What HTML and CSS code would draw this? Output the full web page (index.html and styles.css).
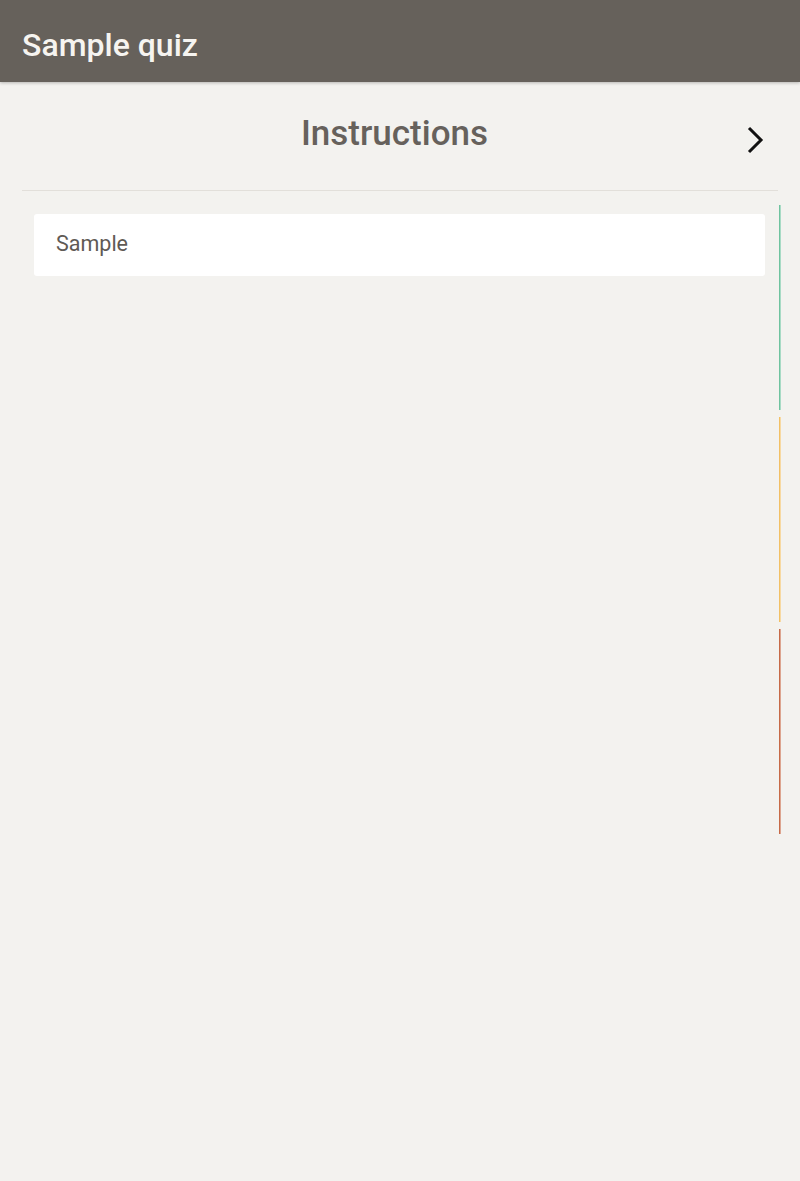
FILE: index.html
```html
<!DOCTYPE html>
<html lang="en">
<head>
<meta charset="utf-8">
<title>Sample quiz</title>
<link rel="stylesheet" href="styles.css">
</head>
<body>
<header class="app-bar">
  <h1 class="app-title">Sample quiz</h1>
</header>
<main class="page">
  <div class="section-head">
    <h2 class="section-title">Instructions</h2>
    <button class="next-btn" aria-label="Next">
      <svg width="24" height="28" viewBox="0 0 24 28"><polyline points="6,2 18,14 6,26" fill="none" stroke="#111" stroke-width="3"/></svg>
    </button>
  </div>
  <div class="content">
    <div class="cards">
      <div class="card">Sample</div>
    </div>
    <div class="progress">
      <span class="seg seg-green"></span>
      <span class="seg seg-yellow"></span>
      <span class="seg seg-red"></span>
    </div>
  </div>
</main>
</body>
</html>
```
FILE: styles.css
```css
html, body {
  margin: 0;
  padding: 0;
}
body {
  background: #f3f2ef;
  font-family: Roboto, "Noto Sans", sans-serif;
  width: 800px;
  min-height: 1181px;
}
.app-bar {
  height: 82px;
  background: #66615b;
  box-shadow: 0 1px 3px rgba(0,0,0,0.25);
  display: flex;
  align-items: center;
  padding: 0 22px;
  box-sizing: border-box;
}
.app-title {
  margin: 0;
  padding-top: 8px;
  color: #f6f4f0;
  font-size: 32px;
  font-weight: 500;
  letter-spacing: 0;
}
.page {
  padding: 0 19px 0 22px;
}
.section-head {
  display: grid;
  height: 108px;
  border-bottom: 1px solid #e2dfda;
  margin-right: 3px;
  align-items: center;
}
.section-title {
  grid-area: 1 / 1;
  margin: 0;
  padding: 0 11px 6px 0;
  text-align: center;
  color: #66615c;
  font-size: 35px;
  font-weight: 500;
}
.next-btn {
  grid-area: 1 / 1;
  justify-self: end;
  margin: 0 11px 0 0;
  padding: 0;
  border: 0;
  background: none;
  display: flex;
  padding-top: 8px;
}
.content {
  display: grid;
  grid-template-columns: 1fr 2px;
}
.cards {
  padding: 23px 14px 0 12px;
}
.card {
  background: #fff;
  border-radius: 3px;
  height: 62px;
  box-sizing: border-box;
  padding: 0 22px 3px;
  display: flex;
  align-items: center;
  color: #5f5a55;
  font-size: 21.5px;
}
.progress {
  display: flex;
  flex-direction: column;
  gap: 7px;
  padding-top: 14px;
}
.seg {
  display: block;
  width: 1px;
  height: 205px;
  border-right: 1px solid rgba(255,255,255,0.4);
}
.seg-green { background-color: #6fc39f; }
.seg-yellow { background-color: #f2c064; }
.seg-red { background-color: #c66a47; }
```
